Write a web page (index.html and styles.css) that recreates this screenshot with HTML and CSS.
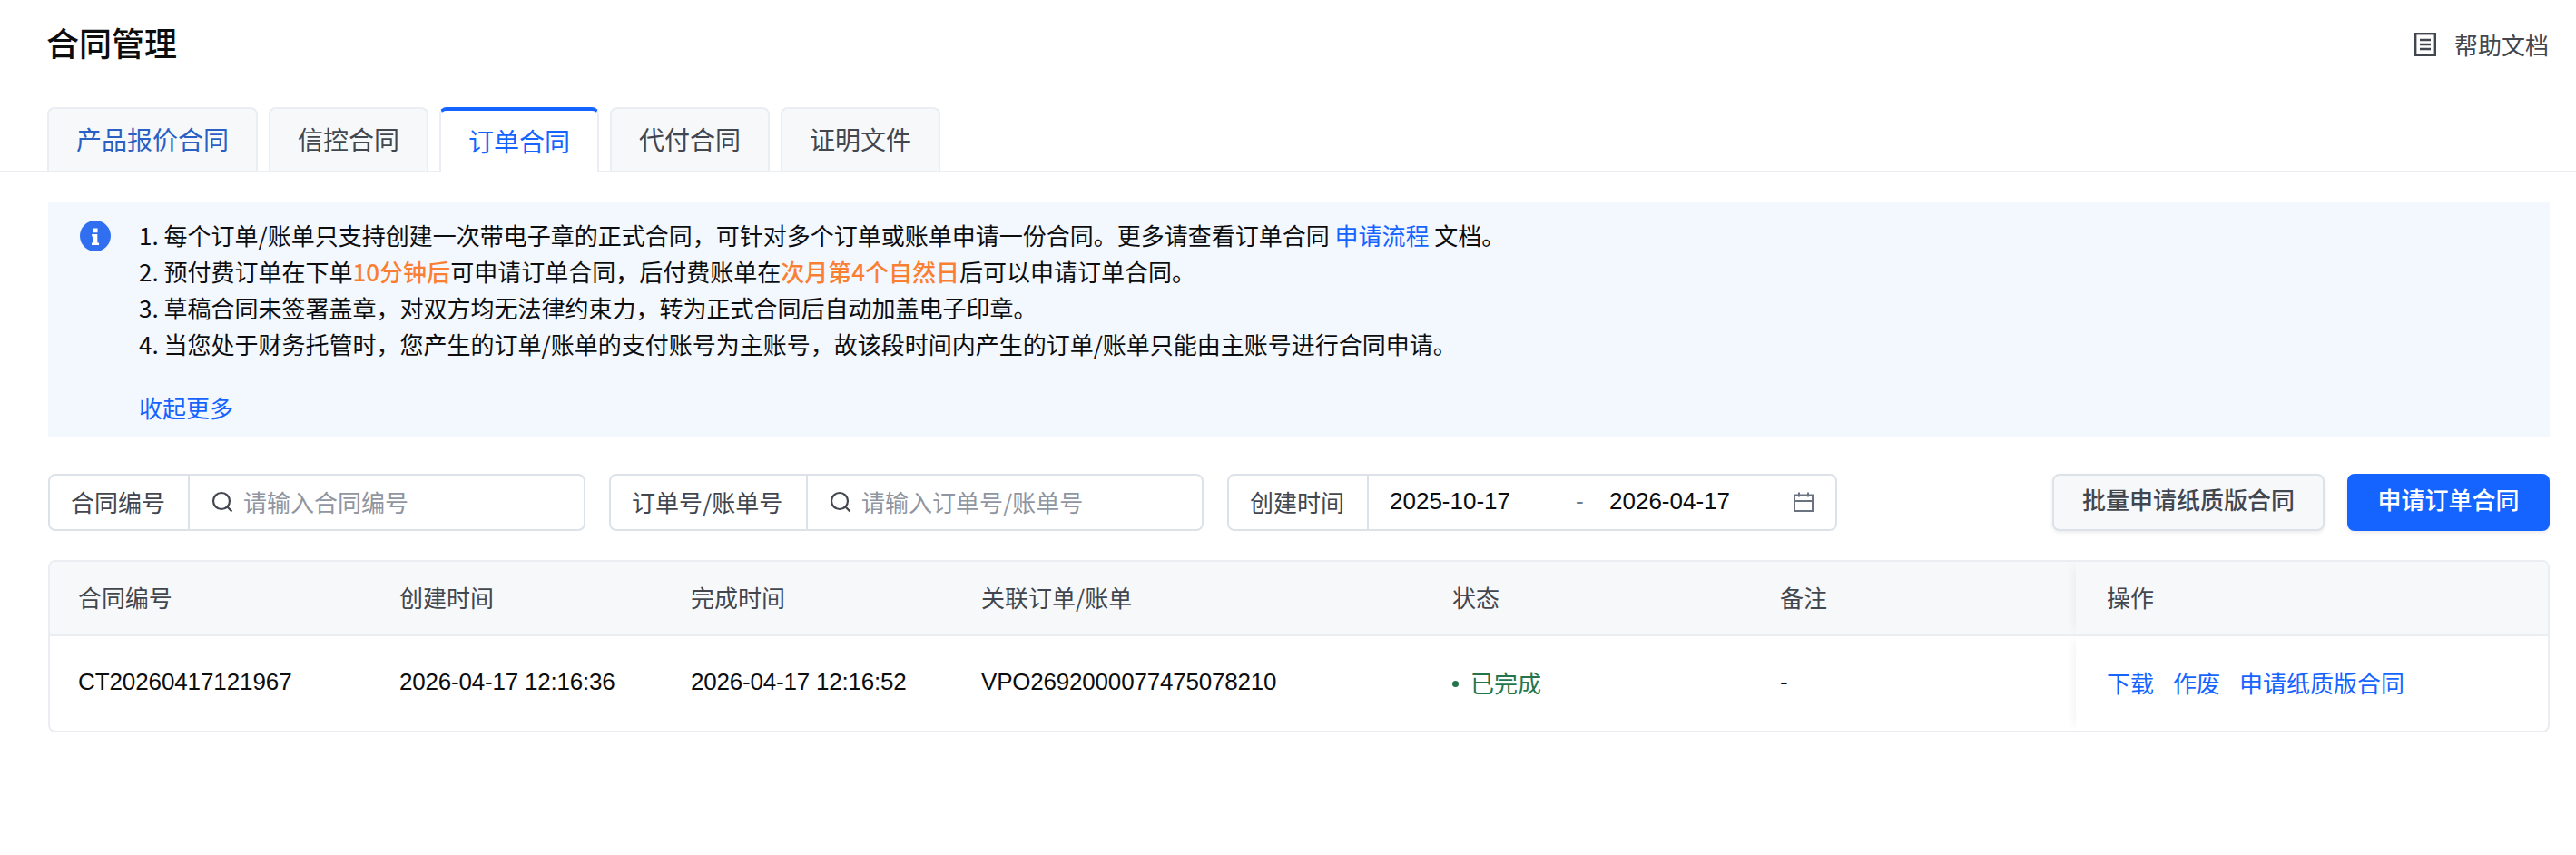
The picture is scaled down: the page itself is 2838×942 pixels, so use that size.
FILE: index.html
```html
<!DOCTYPE html>
<html lang="zh-CN">
<head>
    <meta charset="UTF-8">
    <title>合同管理</title>
    <link rel="stylesheet" href="styles.css">
</head>
<body>
    <div class="page-head">
        <h1>合同管理</h1>
        <a class="help-link" href="#">
            <svg class="help-icon" viewBox="0 0 24 26" fill="none" stroke="#42464e" stroke-width="2.4">
                <rect x="1.2" y="1.2" width="21.6" height="23.6"/>
                <path d="M6 8h12M6 13h12M6 18h12"/>
            </svg>
            <span class="help-text">帮助文档</span>
        </a>
    </div>

    <div class="tabs">
        <a class="tab tab-link" href="#">产品报价合同</a>
        <a class="tab" href="#">信控合同</a>
        <a class="tab active" href="#">订单合同</a>
        <a class="tab" href="#">代付合同</a>
        <a class="tab" href="#">证明文件</a>
    </div>

    <div class="content">
        <div class="notice">
            <svg class="notice-icon" viewBox="0 0 32 32">
                <circle cx="16" cy="16" r="16" fill="#2f6ff0"/>
                <path d="M13.4 8h5v4.4h-5zM12.4 14h5.8v9h1.6v2.4h-7.6V23h1.8v-6.6h-1.6z" fill="#fff"/>
            </svg>
            <div class="notice-body">
                <p>1. 每个订单/账单只支持创建一次带电子章的正式合同，可针对多个订单或账单申请一份合同。更多请查看订单合同 <a href="#">申请流程</a> 文档。</p>
                <p>2. 预付费订单在下单<em>10分钟后</em>可申请订单合同，后付费账单在<em>次月第4个自然日</em>后可以申请订单合同。</p>
                <p>3. 草稿合同未签署盖章，对双方均无法律约束力，转为正式合同后自动加盖电子印章。</p>
                <p>4. 当您处于财务托管时，您产生的订单/账单的支付账号为主账号，故该段时间内产生的订单/账单只能由主账号进行合同申请。</p>
                <a class="notice-more" href="#">收起更多</a>
            </div>
        </div>

        <div class="filters">
            <div class="field field-contract">
                <span class="field-label">合同编号</span>
                <div class="field-input">
                    <svg class="search-icon" viewBox="0 0 24 24" fill="none" stroke="#42464e" stroke-width="2.2">
                        <circle cx="11" cy="11" r="9"/>
                        <path d="M17.5 17.5l5 5"/>
                    </svg>
                    <span class="placeholder">请输入合同编号</span>
                </div>
            </div>
            <div class="field field-order">
                <span class="field-label">订单号/账单号</span>
                <div class="field-input">
                    <svg class="search-icon" viewBox="0 0 24 24" fill="none" stroke="#42464e" stroke-width="2.2">
                        <circle cx="11" cy="11" r="9"/>
                        <path d="M17.5 17.5l5 5"/>
                    </svg>
                    <span class="placeholder">请输入订单号/账单号</span>
                </div>
            </div>
            <div class="field field-date">
                <span class="field-label">创建时间</span>
                <div class="date-range">
                    <span class="date-value">2025-10-17</span>
                    <span class="date-sep">-</span>
                    <span class="date-value">2026-04-17</span>
                    <svg class="date-icon" viewBox="0 0 22 22" fill="none" stroke="#6b7280" stroke-width="2">
                        <rect x="1" y="3.5" width="20" height="17.5"/>
                        <path d="M1 10h20M6 .5v5M16 .5v5"/>
                    </svg>
                </div>
            </div>
            <div class="actions">
                <button class="btn">批量申请纸质版合同</button>
                <button class="btn btn-primary">申请订单合同</button>
            </div>
        </div>

        <div class="table-wrap">
            <table>
                <thead>
                    <tr>
                        <th class="col-no">合同编号</th>
                        <th class="col-created">创建时间</th>
                        <th class="col-done">完成时间</th>
                        <th class="col-order">关联订单/账单</th>
                        <th class="col-status">状态</th>
                        <th class="col-note">备注</th>
                        <th class="col-ops">操作</th>
                    </tr>
                </thead>
                <tbody>
                    <tr>
                        <td class="col-no">CT20260417121967</td>
                        <td>2026-04-17 12:16:36</td>
                        <td>2026-04-17 12:16:52</td>
                        <td>VPO2692000077475078210</td>
                        <td><span class="status"><i class="status-dot"></i>已完成</span></td>
                        <td>-</td>
                        <td class="col-ops">
                            <div class="ops">
                                <a href="#">下载</a>
                                <a href="#">作废</a>
                                <a href="#">申请纸质版合同</a>
                            </div>
                        </td>
                    </tr>
                </tbody>
            </table>
        </div>
    </div>
</body>
</html>
```

FILE: styles.css
```css
* {
    box-sizing: border-box;
}
body {
    margin: 0;
    background: #fff;
    color: #0c0d0e;
    font-family: "Noto Sans CJK SC", "Liberation Sans", sans-serif;
    font-size: 26px;
}
a {
    color: #1664ff;
    text-decoration: none;
}

.page-head {
    display: flex;
    justify-content: space-between;
    align-items: center;
    height: 98px;
    padding: 0 30px 0 51px;
}
h1 {
    margin: -7px 0 0;
    font-size: 36px;
    font-weight: 500;
    color: #0c0d0e;
}
.help-link {
    display: flex;
    align-items: center;
    gap: 20px;
    color: #42464e;
}
.help-icon {
    width: 24px;
    height: 26px;
}
.help-text {
    margin-top: -2px;
}

.tabs {
    display: flex;
    gap: 12px;
    margin-top: 20px;
    padding-left: 52px;
    height: 72px;
    border-bottom: 2px solid #eaedf1;
}
.tab {
    height: 70px;
    padding: 0 30px 3px;
    display: flex;
    align-items: center;
    font-size: 28px;
    color: #42464e;
    background: #f6f8fa;
    border: 2px solid #eaedf1;
    border-bottom: 0;
    border-radius: 8px 8px 0 0;
}
.tab-link {
    color: #2a5fc4;
}
.tab.active {
    height: 72px;
    color: #1664ff;
    background: #fff;
    border-color: #eaedf1;
    border-top: 4px solid #1664ff;
}

.content {
    padding: 33px 29px 0 53px;
}

.notice {
    display: flex;
    gap: 31px;
    height: 258px;
    padding: 16px 35px 0;
    background: #f3f7fe;
}
.notice-icon {
    width: 34px;
    height: 34px;
    margin-top: 4px;
    flex: none;
}
.notice-body p {
    margin: 0;
    line-height: 40px;
}
.notice-body em {
    font-style: normal;
    font-weight: 500;
    color: #fa7f32;
}
.notice-more {
    display: block;
    margin-top: 30px;
    line-height: 40px;
}

.filters {
    display: flex;
    align-items: stretch;
    gap: 26px;
    margin-top: 41px;
    height: 63px;
}
.field {
    display: flex;
    align-items: center;
    border: 2px solid #dde2e9;
    border-radius: 8px;
    background: #fff;
}
.field-contract {
    width: 592px;
}
.field-order {
    width: 655px;
}
.field-date {
    width: 672px;
}
.field-label {
    flex: none;
    width: 154px;
    height: 100%;
    display: flex;
    align-items: center;
    padding: 0 0 3px 23px;
    white-space: nowrap;
    color: #42464e;
    border-right: 2px solid #dde2e9;
}
.field-order .field-label {
    width: 217px;
    padding-left: 23px;
}
.field-input {
    display: flex;
    align-items: center;
    gap: 11px;
    padding: 0 0 2px 24px;
}
.search-icon {
    width: 24px;
    height: 24px;
}
.placeholder {
    color: #8f95a1;
}

.date-range {
    flex: 1;
    display: flex;
    align-items: center;
    padding: 0 0 2px 23px;
    font-family: "Liberation Sans", "Noto Sans CJK SC", sans-serif;
}
.date-value {
    width: 205px;
}
.date-value + .date-sep + .date-value {
    width: 202px;
}
.date-sep {
    width: 37px;
    color: #737a87;
}
.date-icon {
    width: 22px;
    height: 22px;
    margin-left: 1px;
}

.actions {
    margin-left: auto;
    display: flex;
    gap: 25px;
}
.btn {
    height: 63px;
    padding: 0 31px 8px;
    font-family: inherit;
    font-size: 26px;
    font-weight: 500;
    color: #42464e;
    background: #f6f8fa;
    border: 2px solid #dde2e9;
    border-radius: 8px;
    box-shadow: 0 2px 4px rgba(12, 13, 14, .08);
}
.btn-primary {
    width: 223px;
    padding: 0 0 8px;
    color: #fff;
    background: #1664ff;
    border-color: #1664ff;
}

.table-wrap {
    margin-top: 32px;
    height: 190px;
    border: 2px solid #eaedf1;
    border-radius: 8px;
    overflow: hidden;
}
table {
    width: 100%;
    table-layout: fixed;
    border-collapse: collapse;
}
th {
    height: 81px;
    padding: 0 0 3px 34px;
    text-align: left;
    font-weight: 400;
    color: #42464e;
    background: #f6f8fa;
    border-bottom: 2px solid #eaedf1;
}
td {
    height: 105px;
    padding: 0 0 4px 34px;
    letter-spacing: -.2px;
    color: #0c0d0e;
    font-family: "Liberation Sans", "Noto Sans CJK SC", sans-serif;
}
th.col-no,
td.col-no {
    padding-left: 31px;
    letter-spacing: -.1px;
}
.col-no {
    width: 351px;
}
.col-created {
    width: 321px;
}
.col-done {
    width: 320px;
}
.col-order {
    width: 519px;
}
.col-status {
    width: 361px;
}
.col-note {
    width: 360px;
}
.col-ops {
    box-shadow: -6px 0 12px -6px rgba(12, 13, 14, .07);
}
.status {
    display: flex;
    align-items: center;
    gap: 13px;
    letter-spacing: 0;
    color: #24754b;
}
.status-dot {
    width: 7px;
    height: 7px;
    margin-top: 4px;
    border-radius: 50%;
    background: #24754b;
}
.ops {
    display: flex;
    gap: 21px;
    letter-spacing: 0;
}
```
